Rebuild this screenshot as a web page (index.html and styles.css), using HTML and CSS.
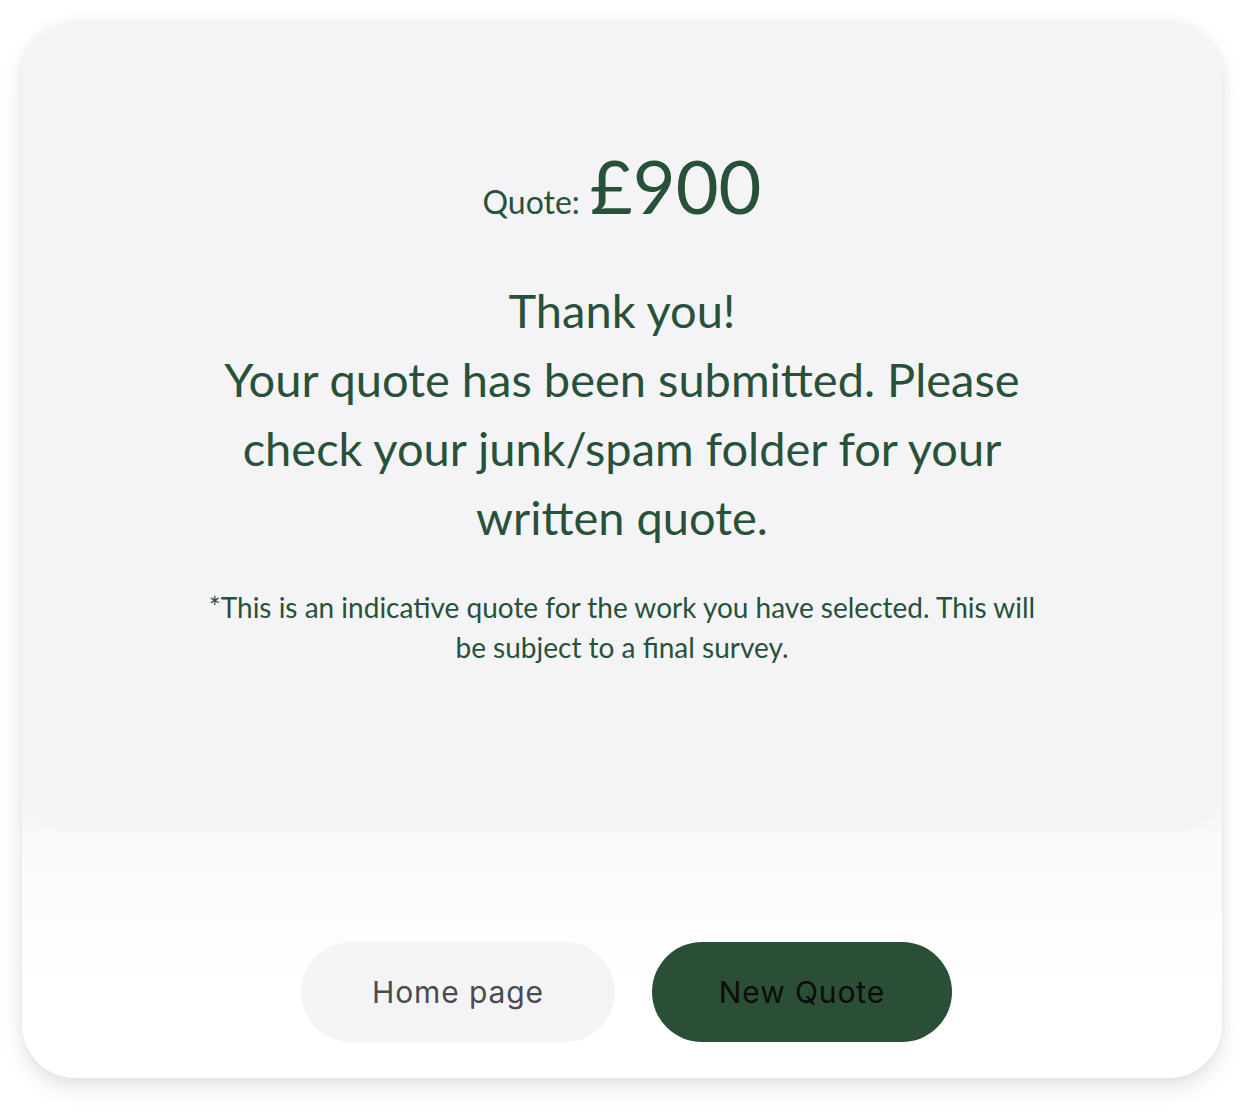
FILE: index.html
```html
<!DOCTYPE html>
<html lang="en">
<head>
<meta charset="utf-8">
<title>Quote submitted</title>
<link rel="stylesheet" href="styles.css">
</head>
<body>
<main class="card">
  <section class="panel">
    <p class="quote"><span class="quote-label">Quote:</span><span class="quote-amount">£900</span></p>
    <p class="thanks">Thank you!<br>Your quote has been submitted. Please check your junk/spam folder for your written quote.</p>
    <p class="note">*This is an indicative quote for the work you have selected. This will be subject to a final survey.</p>
  </section>
  <div class="actions">
    <button class="btn btn-light" type="button">Home page</button>
    <button class="btn btn-dark" type="button">New Quote</button>
  </div>
</main>
</body>
</html>
```

FILE: styles.css
```css
* { box-sizing: border-box; }
html, body { margin: 0; padding: 0; background: #ffffff; }
body { padding: 22px 38px 39px 22px; }

.card {
  width: 1200px;
  height: 1056px;
  border-radius: 54px;
  background: linear-gradient(to bottom, #f4f4f6 0, #f4f4f6 780px, #f9f9fa 812px, #ffffff 965px, #ffffff 100%);
  box-shadow: 0 10px 22px rgba(0, 0, 0, 0.10), 0 0 12px rgba(0, 0, 0, 0.05);
  display: flex;
  flex-direction: column;
  overflow: hidden;
}

.panel {
  height: 810px;
  background: #f4f4f6;
  border-radius: 54px 54px 46px 46px;
  display: flex;
  flex-direction: column;
  align-items: center;
  padding-top: 127px;
  color: #28513a;
  font-family: Lato, "Noto Sans", sans-serif;
  text-align: center;
}

.quote { margin: 0; line-height: 1; }
.quote-label { font-size: 32px; margin-right: 10px; }
.quote-amount { font-size: 74px; }

.thanks {
  margin: 53px 0 0;
  width: 860px;
  font-size: 47px;
  line-height: 69px;
}

.note {
  margin: 35px 0 0;
  width: 850px;
  font-size: 28px;
  line-height: 40px;
}

.actions {
  flex: 1;
  display: flex;
  justify-content: center;
  align-items: flex-start;
  gap: 37px;
  padding-top: 110px;
  padding-left: 9px;
}

.btn {
  height: 100px;
  border: 0;
  border-radius: 50px;
  font-family: Inter, "Noto Sans", sans-serif;
  font-size: 30px;
  letter-spacing: 0.9px;
  cursor: pointer;
}
.btn-light { width: 314px; background: #f4f4f4; color: #4a4a55; }
.btn-dark { width: 300px; background: #2a4e36; color: #0c0c0c; }
```
